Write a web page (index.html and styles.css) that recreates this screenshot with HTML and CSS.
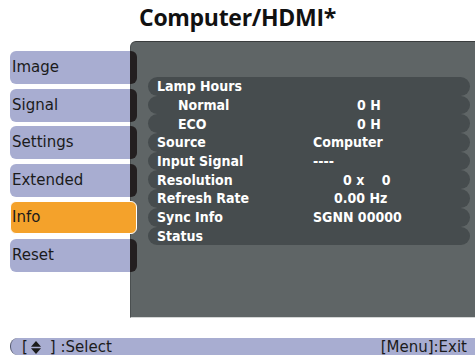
FILE: index.html
```html
<!DOCTYPE html>
<html>
<head>
<meta charset="utf-8">
<link rel="stylesheet" href="styles.css">
</head>
<body>
<div class="screen">
  <div class="title">Computer/HDMI*</div>
  <div class="main">
    <div class="tabs">
      <div class="tab">Image</div>
      <div class="tab">Signal</div>
      <div class="tab">Settings</div>
      <div class="tab">Extended</div>
      <div class="tab active">Info</div>
      <div class="tab">Reset</div>
    </div>
    <div class="panel">
      <div class="rows">
        <div class="row"><span class="label">Lamp Hours</span><span class="value"></span></div>
        <div class="row"><span class="label sub">Normal</span><span class="value v-h">0 H</span></div>
        <div class="row"><span class="label sub">ECO</span><span class="value v-h">0 H</span></div>
        <div class="row"><span class="label">Source</span><span class="value">Computer</span></div>
        <div class="row"><span class="label">Input Signal</span><span class="value">----</span></div>
        <div class="row"><span class="label">Resolution</span><span class="value v-res">0 x    0</span></div>
        <div class="row"><span class="label">Refresh Rate</span><span class="value v-hz">0.00 Hz</span></div>
        <div class="row"><span class="label">Sync Info</span><span class="value">SGNN 00000</span></div>
        <div class="row"><span class="label">Status</span><span class="value"></span></div>
      </div>
    </div>
  </div>
  <div class="footer">
    <span class="hint">[<svg class="updown" width="10" height="13" viewBox="0 0 10 13"><polygon points="0,5.8 5,0 10,5.8"/><polygon points="0,7.2 5,13 10,7.2"/></svg>] :Select</span>
    <span class="hint">[Menu]:Exit</span>
  </div>
</div>
</body>
</html>
```

FILE: styles.css
```css
html, body {
  margin: 0;
  padding: 0;
  background: #ffffff;
}
.screen {
  width: 475px;
  height: 358px;
  overflow: hidden;
  display: flex;
  flex-direction: column;
  font-family: "DejaVu Sans", sans-serif;
}
.title {
  height: 41px;
  box-sizing: border-box;
  padding-top: 2px;
  text-align: center;
  font-family: "Open Sans", sans-serif;
  font-weight: 700;
  font-size: 23px;
  letter-spacing: -0.3px;
  line-height: 31px;
  color: #111;
}
.main {
  display: flex;
  height: 277px;
}
.tabs {
  width: 137px;
  margin-right: -7px;
  position: relative;
  z-index: 2;
  box-sizing: border-box;
  padding: 10px 0 0 10px;
  display: flex;
  flex-direction: column;
  gap: 4.5px;
}
.tab {
  height: 33px;
  box-sizing: border-box;
  border-radius: 6px;
  background: linear-gradient(to right, #a8add1 0, #a8add1 120px, #231f20 120px);
  font-size: 15px;
  line-height: 33px;
  padding-left: 2px;
  color: #1b1b1b;
}
.tab.active {
  background: #f4a22b;
  border: 1px solid #ffffff;
  padding-left: 1px;
  line-height: 31px;
}
.panel {
  flex: 1;
  background: #5f6566;
  border-top: 1px solid #3a3d3e;
  border-left: 1px solid #4a4f50;
  border-top-left-radius: 6px;
  border-bottom: 1px solid #d4d6d6;
  box-sizing: border-box;
  padding: 35px 5px 0 17px;
}
.rows {
  display: flex;
  flex-direction: column;
}
.row {
  height: 18.7px;
  background: #464c4e;
  border-radius: 9.5px;
  display: flex;
  align-items: center;
  color: #ffffff;
  font-family: "DejaVu Sans Condensed", "DejaVu Sans", sans-serif;
  font-weight: 700;
  font-size: 14px;
  white-space: pre;
}
.label {
  width: 165px;
  box-sizing: border-box;
  padding-left: 9px;
}
.label.sub {
  padding-left: 30px;
}
.value.v-h {
  padding-left: 44px;
}
.value.v-res {
  padding-left: 30px;
}
.value.v-hz {
  padding-left: 21px;
}
.footer {
  margin-top: 20px;
  margin-left: 10px;
  height: 17px;
  background: #a8add1;
  border-left: 1px solid #555a70;
  border-radius: 8px 0 0 8px;
  display: flex;
  justify-content: space-between;
  align-items: center;
  padding: 0 8px 0 11px;
  font-size: 15px;
  color: #1b1b1b;
}
.updown {
  margin: 0 9px 0 3px;
  vertical-align: -2px;
  fill: #1b1b1b;
}
```
